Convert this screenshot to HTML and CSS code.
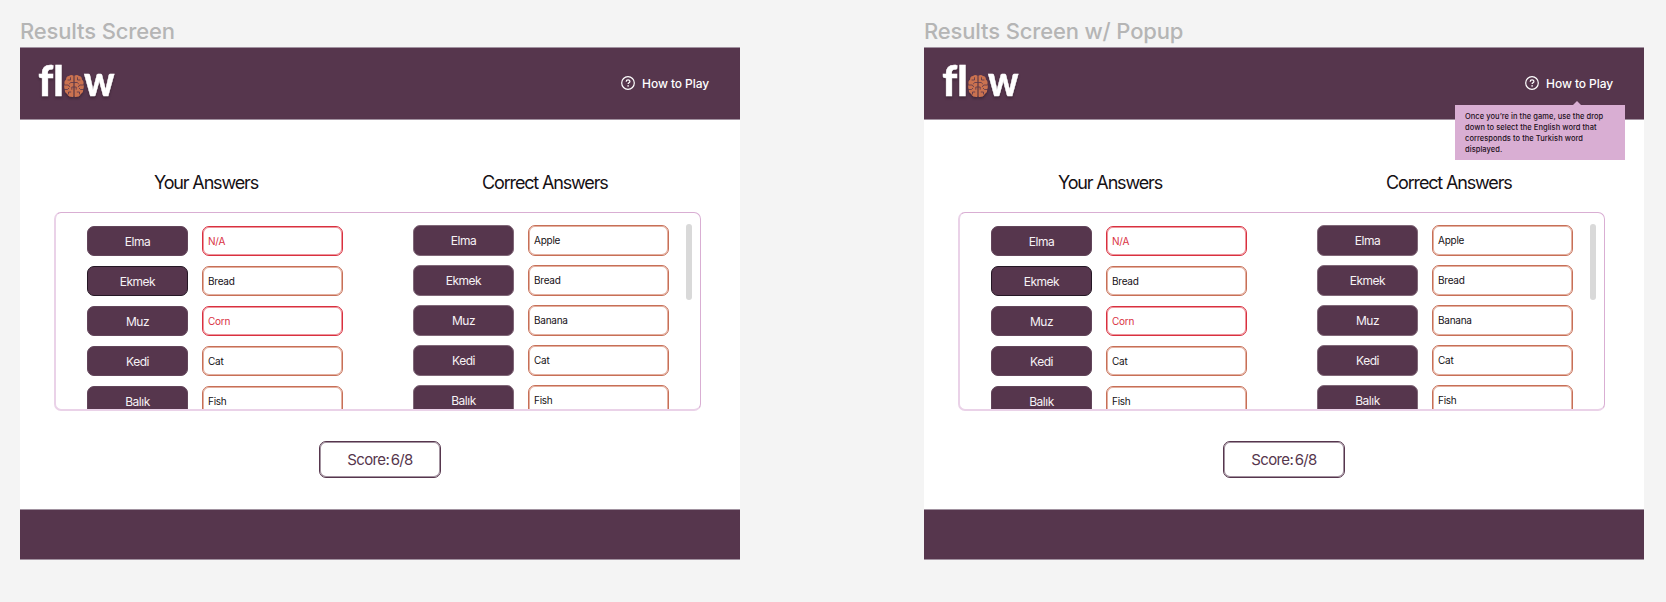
FILE: index.html
```
<!DOCTYPE html>
<html lang="en">
<head>
<meta charset="utf-8">
<title>Flow results screens</title>
<link rel="stylesheet" href="styles.css">
</head>
<body>
<svg width="0" height="0" class="defs" aria-hidden="true">
  <symbol id="brain" viewBox="0 0 20 23">
    <path fill="#ca7250" d="M9.5 1.2C8 0 6 .3 5 1.6 3 1.8 2 3.300 2.100 5 .6 6.200 0 8 .7 9.800-.1 11.500 0 13.500.9 14.900.5 17 1.500 18.900 3.200 19.400 4 21.300 5.500 22.400 7.200 22.200 8.200 22.800 9 22.500 9.500 22zM10.500 1.200C12 0 14 .3 15 1.600 17 1.800 18 3.300 17.900 5 19.400 6.200 20 8 19.300 9.800 20.100 11.500 20 13.500 19.100 14.900 19.500 17 18.500 18.900 16.800 19.400 16 21.300 14.500 22.400 12.800 22.200 11.800 22.800 11 22.500 10.500 22z"/>
    <g fill="none" stroke="#56364d" stroke-width=".8" stroke-linecap="round">
      <path d="M6.500 3.200v2.300H4M9.500 8H6.800L5.500 9.200M1 10.500h3.300l1.300 1.800M9.500 12.500H7.800v2.300M1.200 15h2.300l1.200-1.200M6.800 17.500H4.500v2"/>
      <path d="M13.500 3.200v2.300H16M10.500 8h2.700l1.300 1.200M19 10.500h-3.300l-1.300 1.800M10.500 12.500h1.700v2.300M18.800 15h-2.300l-1.200-1.200M13.200 17.500h2.300v2"/>
    </g>
  </symbol>
  <symbol id="help" viewBox="0 0 14 14">
    <circle cx="7" cy="7" r="6.300" fill="none" stroke="#fff" stroke-width="1.200"/>
    <path d="M5.200 5.700c0-2.400 3.700-2.400 3.700-.1 0 1.300-1.800 1.200-1.800 2.500" fill="none" stroke="#fff" stroke-width="1.200"/>
    <circle cx="7.100" cy="9.900" r=".8" fill="#fff"/>
  </symbol>
</svg>
<main class="canvas">
  <section class="frame">
    <h2 class="frame-title">Results Screen</h2>
    <div class="screen">
      <header class="header">
        <svg class="logo" viewBox="0 0 84 58"><text x="0.300" y="46" textLength="25.500" lengthAdjust="spacingAndGlyphs">fl</text><use href="#brain" x="26" y="24.500" width="20" height="23"/><text x="46" y="46" textLength="30.500" lengthAdjust="spacingAndGlyphs">w</text></svg>
        <div class="help"><svg class="help-icon"><use href="#help"/></svg><span>How to Play</span></div>
      </header>
      <div class="content">
        <div class="headings"><h3 class="h-your">Your Answers</h3><h3 class="h-correct">Correct Answers</h3></div>
        <div class="panel">
          <div class="list yours">
            <span class="word">Elma</span><span class="answer wrong">N/A</span>
            <span class="word focus">Ekmek</span><span class="answer">Bread</span>
            <span class="word">Muz</span><span class="answer wrong">Corn</span>
            <span class="word">Kedi</span><span class="answer">Cat</span>
            <span class="word">Balık</span><span class="answer">Fish</span>
          </div>
          <div class="list correct">
            <span class="word">Elma</span><span class="answer">Apple</span>
            <span class="word">Ekmek</span><span class="answer">Bread</span>
            <span class="word">Muz</span><span class="answer">Banana</span>
            <span class="word">Kedi</span><span class="answer">Cat</span>
            <span class="word">Balık</span><span class="answer">Fish</span>
          </div>
          <div class="scrollbar"></div>
        </div>
        <div class="score">Score: 6/8</div>
      </div>
      <footer class="footer"></footer>
    </div>
  </section>
  <section class="frame">
    <h2 class="frame-title">Results Screen w/ Popup</h2>
    <div class="screen">
      <header class="header">
        <svg class="logo" viewBox="0 0 84 58"><text x="0.300" y="46" textLength="25.500" lengthAdjust="spacingAndGlyphs">fl</text><use href="#brain" x="26" y="24.500" width="20" height="23"/><text x="46" y="46" textLength="30.500" lengthAdjust="spacingAndGlyphs">w</text></svg>
        <div class="help"><svg class="help-icon"><use href="#help"/></svg><span>How to Play</span></div>
        <div class="tooltip">Once you’re in the game, use the drop<br>down to select the English word that<br>corresponds to the Turkish word<br>displayed.</div>
      </header>
      <div class="content">
        <div class="headings"><h3 class="h-your">Your Answers</h3><h3 class="h-correct">Correct Answers</h3></div>
        <div class="panel">
          <div class="list yours">
            <span class="word">Elma</span><span class="answer wrong">N/A</span>
            <span class="word focus">Ekmek</span><span class="answer">Bread</span>
            <span class="word">Muz</span><span class="answer wrong">Corn</span>
            <span class="word">Kedi</span><span class="answer">Cat</span>
            <span class="word">Balık</span><span class="answer">Fish</span>
          </div>
          <div class="list correct">
            <span class="word">Elma</span><span class="answer">Apple</span>
            <span class="word">Ekmek</span><span class="answer">Bread</span>
            <span class="word">Muz</span><span class="answer">Banana</span>
            <span class="word">Kedi</span><span class="answer">Cat</span>
            <span class="word">Balık</span><span class="answer">Fish</span>
          </div>
          <div class="scrollbar"></div>
        </div>
        <div class="score">Score: 6/8</div>
      </div>
      <footer class="footer"></footer>
    </div>
  </section>
</main>
</body>
</html>
```
FILE: styles.css
```
* { box-sizing: border-box; }
body { margin: 0; background: #f4f4f4; font-family: Inter, "Liberation Sans", sans-serif; overflow: hidden; }
.defs { display: block; }
.canvas { display: flex; gap: 184px; padding-left: 20px; height: 602px; }
.frame { width: 720px; flex: none; }
.frame-title { margin: 0; height: 47px; padding: 18px 0 0; font-size: 22px; line-height: 27px; font-weight: 500; letter-spacing: -.15px; color: #b5b5b5; }
.screen { height: 513px; background: #fff; display: flex; flex-direction: column; }
.header { position: relative; height: 73px; flex: none; background: #56364d; border: solid #a192a0; border-width: 1px 0; display: flex; justify-content: space-between; padding: 0 31px 0 18px; }
.logo { width: 84px; height: 58px; margin-top: 2px; overflow: visible; fill: #fff; font: 900 42px/50px Lato, sans-serif; font-variant-ligatures: none; filter: drop-shadow(0 2px 1px rgba(0,0,0,.25)); }
.logo text { stroke: #fff; stroke-width: .5px; }
.help { display: flex; align-items: center; gap: 7px; height: 70px; color: #fff; font-size: 12px; font-weight: 450; letter-spacing: -.08px; white-space: nowrap; }
.help-icon { width: 14px; height: 14px; }
.tooltip { position: absolute; left: 531px; top: 57px; width: 170px; height: 55px; padding: 6px 0 0 10px; background: #d9aed3; color: #1d101b; font-size: 7.5px; line-height: 11px; font-weight: 500; letter-spacing: .05px; white-space: nowrap; }
.tooltip::before { content: ""; position: absolute; left: 118px; top: -4px; border: solid transparent; border-width: 0 4px 4px; border-bottom-color: #d9aed3; }
.content { height: 389px; flex: none; padding: 50px 39px 0 34px; display: flex; flex-direction: column; }
.headings { display: flex; height: 42px; padding-left: 100px; }
.headings h3 { margin: 0; font-size: 18px; line-height: 26px; font-weight: 400; color: #151015; white-space: nowrap; letter-spacing: -1.15px; }
.h-your { width: 328px; }
.panel { width: 647px; height: 199px; flex: none; overflow: hidden; display: flex; border: 1px solid #d9aed3; border-left: 2px solid #ead2e8; border-bottom: 2px solid #ead2e8; border-radius: 7px; padding-left: 31px; }
.list { display: grid; grid-template-columns: 101px 141px; column-gap: 14px; flex: none; align-content: start; }
.yours { grid-template-rows: 30px 30px 30px 30px 31px; row-gap: 10px; padding-top: 13px; }
.correct { grid-template-rows: repeat(5, 31px); row-gap: 9px; padding-top: 12px; margin-left: 70px; }
.word { display: flex; align-items: center; justify-content: center; border-radius: 7px; background: #56364d; border: 1px solid #62455a; color: #f6f2f5; font-size: 12px; letter-spacing: -.5px; }
.correct .word { border-color: #806878; }
.list .focus { border-color: #251725; }
.answer { display: flex; align-items: center; border-radius: 7px; border: 1px solid #c76f57; box-shadow: inset 0 0 0 1px #e3b0a0; padding: 0 0 1px 5px; color: #151015; font-size: 10px; letter-spacing: -.25px; }
.wrong { border-color: #d9303f; box-shadow: inset 0 0 0 1px #ed959c; color: #d9303f; }
.scrollbar { width: 6px; height: 76px; margin: 11px 0 0 17px; border-radius: 3px; background: #d9d9d9; flex: none; }
.score { width: 122px; height: 37px; margin: 30px 0 0 265px; border: 1px solid #56364d; box-shadow: inset 0 0 0 1px #a393a0; border-radius: 7px; color: #56364d; display: flex; align-items: center; justify-content: center; font-size: 15px; letter-spacing: -.65px; word-spacing: -2px; }
.footer { height: 51px; flex: none; background: #56364d; border: solid #a192a0; border-width: 1px 0; }
```
